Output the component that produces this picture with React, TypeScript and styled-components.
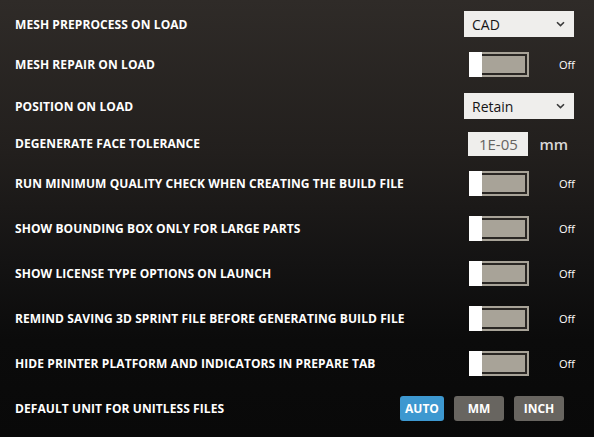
import { useState } from "react";
import styled, { createGlobalStyle } from "styled-components";

const GlobalStyle = createGlobalStyle`
  html, body {
    margin: 0;
    padding: 0;
    background: #0a0a0a;
  }
  body {
    font-family: "Open Sans", "Noto Sans", "Liberation Sans", sans-serif;
  }
`;

const Panel = styled.div`
  width: 594px;
  height: 437px;
  box-sizing: border-box;
  padding-top: 4px;
  background: linear-gradient(
    180deg,
    #2f2b28 0%,
    #221f1d 35%,
    #141313 60%,
    #0b0b0b 78%,
    #090909 100%
  );
  overflow: hidden;
`;

const Row = styled.div<{ $h: number }>`
  display: flex;
  align-items: center;
  height: ${(p) => p.$h}px;
  padding: 0 20px 0 15px;
`;

const Label = styled.div`
  flex: 1;
  color: #ffffff;
  font-size: 12px;
  font-weight: 700;
  letter-spacing: 0.08px;
  white-space: nowrap;
`;

const SelectBox = styled.div`
  width: 110px;
  height: 26px;
  box-sizing: border-box;
  display: flex;
  align-items: center;
  justify-content: space-between;
  padding: 0 9px 0 8px;
  background: #efeeec;
  color: #151515;
  font-size: 14px;
`;

const ToggleGroup = styled.div`
  display: flex;
  align-items: center;
  justify-content: space-between;
  width: 106px;
  margin-right: -1px;
`;

const Track = styled.button`
  position: relative;
  width: 60px;
  height: 25px;
  padding: 2px;
  box-sizing: border-box;
  border: none;
  background: #a8a398;
  cursor: pointer;
`;

const TrackInner = styled.div`
  width: 100%;
  height: 100%;
  box-sizing: border-box;
  border: 2px solid #2a2724;
  background: #a8a398;
`;

const Knob = styled.div<{ $on: boolean }>`
  position: absolute;
  top: 0;
  left: ${(p) => (p.$on ? "47px" : "0")};
  width: 13px;
  height: 25px;
  background: #ffffff;
`;

const StateText = styled.span`
  color: #ffffff;
  font-size: 11px;
`;

const NumberGroup = styled.div`
  display: flex;
  align-items: center;
  gap: 11px;
  margin-right: 6px;
`;

const NumberBox = styled.div`
  width: 60px;
  height: 24px;
  display: flex;
  align-items: center;
  justify-content: center;
  background: #efeeec;
  color: #666461;
  font-size: 15px;
`;

const Unit = styled.span`
  color: #d8d8d8;
  font-size: 15px;
  font-weight: 600;
`;

const UnitButtons = styled.div`
  display: flex;
  gap: 10px;
  margin-right: 10px;
`;

const UnitButton = styled.button<{ $active: boolean; $w: number }>`
  width: ${(p) => p.$w}px;
  height: 25px;
  border: none;
  border-radius: 3px;
  padding: 0;
  background: ${(p) => (p.$active ? "#3d98d0" : "#686560")};
  color: #ffffff;
  font-family: inherit;
  font-size: 12px;
  font-weight: 700;
  cursor: pointer;
`;

const Chevron = () => (
  <svg width="9" height="6" viewBox="0 0 9 6">
    <path d="M1 1.2 L4.5 4.6 L8 1.2" fill="none" stroke="#3a3a3a" strokeWidth="1.6" />
  </svg>
);

const Toggle = ({ initial = false }: { initial?: boolean }) => {
  const [on, setOn] = useState(initial);
  return (
    <ToggleGroup>
      <Track onClick={() => setOn(!on)}>
        <TrackInner />
        <Knob $on={on} />
      </Track>
      <StateText>{on ? "On" : "Off"}</StateText>
    </ToggleGroup>
  );
};

const toggleRows = [
  "RUN MINIMUM QUALITY CHECK WHEN CREATING THE BUILD FILE",
  "SHOW BOUNDING BOX ONLY FOR LARGE PARTS",
  "SHOW LICENSE TYPE OPTIONS ON LAUNCH",
  "REMIND SAVING 3D SPRINT FILE BEFORE GENERATING BUILD FILE",
  "HIDE PRINTER PLATFORM AND INDICATORS IN PREPARE TAB",
];

const units = [
  { name: "AUTO", w: 44 },
  { name: "MM", w: 50 },
  { name: "INCH", w: 50 },
];

export default function App() {
  const [unit, setUnit] = useState("AUTO");

  return (
    <>
      <GlobalStyle />
      <Panel>
        <Row $h={40}>
          <Label>MESH PREPROCESS ON LOAD</Label>
          <SelectBox>
            CAD
            <Chevron />
          </SelectBox>
        </Row>
        <Row $h={41}>
          <Label>MESH REPAIR ON LOAD</Label>
          <Toggle />
        </Row>
        <Row $h={42}>
          <Label>POSITION ON LOAD</Label>
          <SelectBox>
            Retain
            <Chevron />
          </SelectBox>
        </Row>
        <Row $h={33}>
          <Label>DEGENERATE FACE TOLERANCE</Label>
          <NumberGroup>
            <NumberBox>1E-05</NumberBox>
            <Unit>mm</Unit>
          </NumberGroup>
        </Row>
        {toggleRows.map((label, i) => (
          <Row key={label} $h={i === 0 ? 46 : 45}>
            <Label>{label}</Label>
            <Toggle />
          </Row>
        ))}
        <Row $h={45}>
          <Label>DEFAULT UNIT FOR UNITLESS FILES</Label>
          <UnitButtons>
            {units.map((u) => (
              <UnitButton
                key={u.name}
                $w={u.w}
                $active={unit === u.name}
                onClick={() => setUnit(u.name)}
              >
                {u.name}
              </UnitButton>
            ))}
          </UnitButtons>
        </Row>
      </Panel>
    </>
  );
}
